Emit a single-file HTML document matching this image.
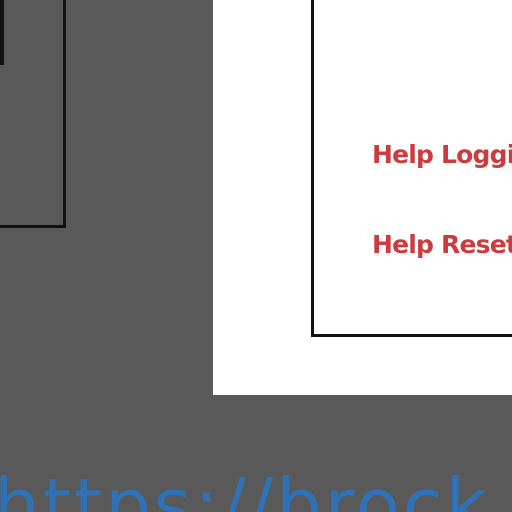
<!DOCTYPE html>
<html><head><style>
html,body{margin:0;padding:0;width:512px;height:512px;overflow:hidden;background:#595959;position:relative;font-family:"DejaVu Sans","Liberation Sans",sans-serif}
div{position:absolute}
.t{color:#cc3b3e;font-weight:bold;font-size:25px;white-space:nowrap;letter-spacing:-0.8px}
</style></head><body>
<div style="left:-10px;top:-10px;width:73px;height:235px;border:3px solid #111;box-sizing:content-box;border-left:none;border-top:none"></div>
<div style="left:0;top:0;width:4px;height:65px;background:#111"></div>
<div style="left:213px;top:0;width:299px;height:395px;background:#fff;overflow:hidden">
<div style="left:98px;top:-10px;width:220px;height:344px;border-left:3px solid #111;border-bottom:3px solid #111"></div>
<div class="t" style="left:159px;top:140px">Help Logging</div>
<div class="t" style="left:159px;top:230px">Help Reset</div>
</div>
<div style="left:-6px;top:466px;width:520px;height:46px;overflow:hidden"><div style="left:0;top:0;font-family:'DejaVu Sans',sans-serif;font-size:72px;line-height:80px;margin-top:-1px;color:#2f72b5;white-space:nowrap;letter-spacing:3px">https://brock</div></div>
</body></html>
